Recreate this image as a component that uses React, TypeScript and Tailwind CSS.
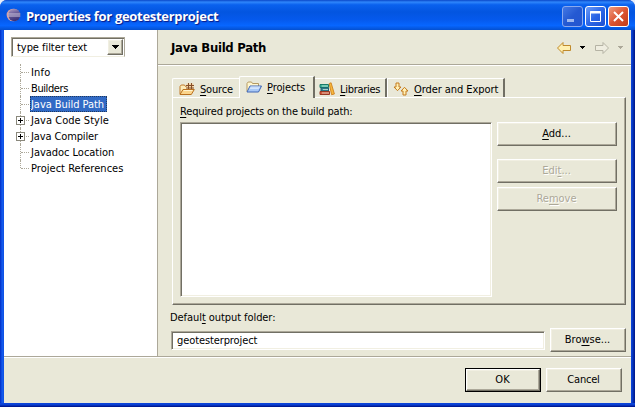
import type { ReactNode } from "react";

const FACE = "border border-t-white border-l-white border-r-[#716f64] border-b-[#716f64] shadow-[inset_-1px_-1px_0_#aca899,inset_1px_1px_0_#f1efe2]";

function Push({ className = "", disabled = false, children }: { className?: string; disabled?: boolean; children: ReactNode }) {
  return (
    <button
      className={`flex h-[24px] shrink-0 items-center justify-center whitespace-nowrap bg-[#e9e8d8] pr-px ${FACE} ${
        disabled ? "text-[#aca899] [text-shadow:1px_1px_0_#fff]" : "text-black"
      } ${className}`}
    >
      <span className="leading-[14px]">{children}</span>
    </button>
  );
}

function U({ children }: { children: ReactNode }) {
  return <span className="underline decoration-1 underline-offset-[2px]">{children}</span>;
}

function EclipseLogo() {
  return (
    <svg width="16" height="16" viewBox="0 0 16 16" className="-mt-[3px] shrink-0">
      <defs>
        <linearGradient id="orb" x1="0" y1="0" x2="0.3" y2="1">
          <stop offset="0" stopColor="#b9a5c4" />
          <stop offset="0.45" stopColor="#6d609c" />
          <stop offset="1" stopColor="#3d3478" />
        </linearGradient>
      </defs>
      <ellipse cx="7.200" cy="8" rx="6.600" ry="6.300" fill="#d8a3a4" />
      <ellipse cx="8.300" cy="8" rx="6" ry="6.200" fill="url(#orb)" />
      <path d="M2 7h12.300M2 9h12.300" stroke="#d9d2e4" strokeWidth="0.9" />
    </svg>
  );
}

function SourceFolderIcon() {
  return (
    <svg width="16" height="14" viewBox="0 0 16 14" className="shrink-0">
      <path d="M1 12V4.500L2.200 3h3.300l1 1.500h6V7" fill="#fdebb8" stroke="#c07a2a" />
      <path d="M7.500 1.500h7v6h-7z" fill="#f3d3a4" />
      <path d="M7 3.500h8M7 6h8M9.500 1v7M12.500 1v7" stroke="#86502a" strokeWidth="1" />
      <path d="M1 12.500L4 7.500h11.300L12.300 12.500z" fill="#fbd58c" stroke="#b9701f" />
      <path d="M4.600 8.500h8.900" stroke="#fff3cf" />
    </svg>
  );
}

function ProjectFolderIcon() {
  return (
    <svg width="16" height="14" viewBox="0 0 16 14" className="shrink-0">
      <path d="M1 11.500V3.500L2.200 2h3.300l1 1.500h6V6" fill="#fff6cf" stroke="#b59a62" />
      <path d="M1 12L4 6h11.500L12.500 12z" fill="#a9c9f6" stroke="#4067b5" />
      <path d="M4.500 7h9.500M3.800 8.300h9" stroke="#e3f0ff" strokeWidth="0.9" />
    </svg>
  );
}

function BooksIcon() {
  return (
    <svg width="16" height="14" viewBox="0 0 16 14" className="shrink-0">
      <path d="M1 2.500h8.500v3H1z" fill="#45b59b" stroke="#187a68" />
      <path d="M2 6h7.500v3H2z" fill="#3f8f9b" stroke="#1e5f71" />
      <path d="M1 9.500h9.500v3H1z" fill="#d85a3c" stroke="#993822" />
      <path d="M3 4h6M4 7.500h5M3 11h7" stroke="#d9efe4" strokeWidth="0.7" />
      <path d="M10.200 1.500l1.900-.7 3.300 11.200-2.800.7z" fill="#f6b93d" stroke="#cf7f1d" strokeWidth="0.9" />
    </svg>
  );
}

function OrderIcon() {
  return (
    <svg width="16" height="14" viewBox="0 0 16 14" className="shrink-0">
      <path d="M3 1h3v4h2L4.500 8.700 1 5h2z" fill="#fff0b5" stroke="#c47a1c" />
      <path d="M10 13h3V9h2l-3.500-3.700L8 9h2z" fill="#fff0b5" stroke="#c47a1c" />
    </svg>
  );
}

function NavArrow({ forward = false }: { forward?: boolean }) {
  return (
    <svg width="16" height="14" viewBox="0 0 16 14" className={forward ? "-scale-x-100" : ""}>
      <path
        d="M1.500 7L7 1.500v3h7.500v5H7v3z"
        fill={forward ? "#efede0" : "#fff0b0"}
        stroke={forward ? "#b5b3a4" : "#c08a2c"}
        strokeLinejoin="round"
      />
    </svg>
  );
}

function Caret({ dim = false }: { dim?: boolean }) {
  return (
    <svg width="5" height="3" viewBox="0 0 5 3" shapeRendering="crispEdges">
      <path d="M0 0h5L2.500 3z" fill={dim ? "#aca899" : "#000"} />
    </svg>
  );
}

const tree = [
  { name: "Info", w: "tracking-[0.2px]" },
  { name: "Builders", w: "tracking-[-0.4px]" },
  { name: "Java Build Path", w: "tracking-[-0.05px]", selected: true },
  { name: "Java Code Style", w: "tracking-[0.03px]", branch: true },
  { name: "Java Compiler", w: "tracking-[-0.12px]", branch: true },
  { name: "Javadoc Location", w: "tracking-[-0.03px]" },
  { name: "Project References", w: "tracking-[0.03px]" },
];

function TreeRow({ item, last }: { item: (typeof tree)[number]; last: boolean }) {
  return (
    <div className="flex h-4 items-center">
      <div className="relative h-4 w-[14px] shrink-0">
        <span className={`absolute left-[4px] top-0 border-l border-dotted border-[#aca899] ${last ? "h-2" : "h-4"}`} />
        <span className="absolute left-[5px] top-2 w-[8px] border-t border-dotted border-[#aca899]" />
        {item.branch && (
          <svg width="9" height="9" viewBox="0 0 9 9" className="absolute left-0 top-[4px]" shapeRendering="crispEdges">
            <path d="M.5.5h8v8h-8z" fill="#fff" stroke="#8a887c" />
            <path d="M2 4.500h5M4.500 2v5" stroke="#000" />
          </svg>
        )}
      </div>
      <span
        className={`flex h-4 items-center whitespace-nowrap pl-px pt-px ${item.w} ${
          item.selected ? "w-[77px] bg-[#316ac5] text-white outline-1 -outline-offset-1 outline-dotted outline-[#203a60]" : ""
        }`}
      >
        {item.name}
      </span>
    </div>
  );
}

function WindowButton({ kind }: { kind: "min" | "max" | "close" }) {
  const tone =
    kind === "close"
      ? "border-white bg-linear-to-br from-[#ee9a7d] via-[#dc5532] to-[#c23a16]"
      : kind === "max"
        ? "border-white bg-linear-to-br from-[#6d9cf8] via-[#2c66e6] to-[#1b4fd2]"
        : "border-[#8aa9ee] bg-linear-to-br from-[#4478e4] via-[#2459d2] to-[#2456d0]";
  return (
    <div className={`h-[21px] w-[21px] rounded-[3px] border ${tone}`}>
      <svg width="19" height="19" viewBox="0 0 19 19">
        {kind === "min" && <path d="M4 13.500h7" stroke="#9db8f0" strokeWidth="3" />}
        {kind === "max" && (
          <>
            <path d="M4.500 4.500h10v10h-10z" fill="none" stroke="#fff" />
            <path d="M4 5.500h11" stroke="#fff" strokeWidth="2" />
          </>
        )}
        {kind === "close" && <path d="M5 5l9 9M14 5l-9 9" stroke="#fff" strokeWidth="2" />}
      </svg>
    </div>
  );
}

export default function App() {
  return (
    <div className="h-[407px] w-[635px] bg-[#e8eefa]">
      <div className="flex h-[407px] w-[635px] flex-col overflow-hidden rounded-t-[7px] bg-[#0a3fd0] font-['DejaVu_Sans_Condensed','DejaVu_Sans',sans-serif] text-[11px] leading-[14px] text-black">
        <header className="flex h-[30px] shrink-0 items-center bg-[linear-gradient(180deg,#0a47c8_0%,#2f86fb_7%,#0a61ee_16%,#0355e0_40%,#0559ec_65%,#0766ff_85%,#0450d0_100%)] pl-[6px] pr-[6px] pt-[2px]">
          <EclipseLogo />
          <h1 className="ml-[4px] flex-1 whitespace-nowrap font-['Open_Sans',sans-serif] text-[13px] font-bold leading-[18px] text-white [text-shadow:1px_1px_1px_#0a1883]">
            <span className="tracking-[-0.3px]">Properties for geotesterproject</span>
          </h1>
          <div className="flex gap-[2px]">
            <WindowButton kind="min" />
            <WindowButton kind="max" />
            <WindowButton kind="close" />
          </div>
        </header>

        <div className="h-[377px] bg-[linear-gradient(0deg,#001486_0px,#001ea0_1px,#0b3fd0_2px,#0b45dc_4px,transparent_4px),linear-gradient(90deg,#0028c0_0px,#0b45dc_1px,#1660f0_3px,#0b45dc_4px,#0b45dc_631px,#0a3fcf_632px,#0430b4_633px,#001486_635px)] px-[4px] pb-[4px]">
          <div className="flex h-[373px] flex-col bg-[#e9e8d8]">
            <div className="flex h-[326px] shrink-0">
              <aside className="w-[153px] shrink-0 bg-white pl-[7px] pt-[7px]">
                <div className="flex h-[20px] w-[114px] items-center border border-b-[#f1efe2] border-l-[#aca899] border-r-[#aca899] border-t-[#aca899] bg-white shadow-[inset_1px_1px_0_#716f64]">
                  <span className="flex-1 whitespace-nowrap pl-[5px] pt-[2px] tracking-[-0.05px]">type filter text</span>
                  <span className={`mr-px flex h-[16px] w-[16px] items-center justify-center bg-[#e9e8d8] ${FACE}`}>
                    <svg width="7" height="4" viewBox="0 0 7 4" shapeRendering="crispEdges">
                      <path d="M0 0h7L3.500 4z" />
                    </svg>
                  </span>
                </div>
                <nav className="ml-[5px] mt-[7px]">
                  {tree.map((item, i) => (
                    <TreeRow key={item.name} item={item} last={i === tree.length - 1} />
                  ))}
                </nav>
              </aside>

              <main className="flex min-w-0 flex-1 flex-col border-l border-[#aca899]">
                <div className="flex h-[36px] shrink-0 items-center border-b border-white pl-[13px] pr-[8px] shadow-[inset_0_-1px_0_#aca899]">
                  <h2 className="flex-1 whitespace-nowrap pt-px text-[13px] font-bold tracking-[-0.3px]">Java Build Path</h2>
                  <div className="flex items-center">
                    <NavArrow />
                    <span className="ml-[8px] mr-[9px]"><Caret /></span>
                    <NavArrow forward />
                    <span className="ml-[8px]"><Caret dim /></span>
                  </div>
                </div>

                <div className="ml-[14px] mt-[10px] flex h-[21px] shrink-0 items-end whitespace-nowrap">
                  <div className="flex h-[19px] w-[67px] items-center rounded-tl-[2px] border-l border-t border-white pl-[6px] pt-px">
                    <SourceFolderIcon />
                    <span className="ml-[5px] pt-[2px] tracking-[-0.2px]"><U>S</U>ource</span>
                  </div>
                  <div className="z-10 -mb-px flex h-[22px] w-[76px] items-center rounded-tl-[2px] border-l border-r-2 border-t border-l-white border-r-[#716f64] border-t-white bg-[#e9e8d8] pb-[2px] pl-[6px]">
                    <ProjectFolderIcon />
                    <span className="ml-[5px] pt-[2px] tracking-[-0.1px]"><U>P</U>rojects</span>
                  </div>
                  <div className="flex h-[19px] w-[72px] items-center border-r-2 border-t border-r-[#716f64] border-t-white pl-[4px] pt-px">
                    <BooksIcon />
                    <span className="ml-[5px] pt-[2px] tracking-[-0.3px]"><U>L</U>ibraries</span>
                  </div>
                  <div className="flex h-[19px] w-[118px] items-center border-l border-r-2 border-t border-l-white border-r-[#716f64] border-t-white pl-[5px] pt-px">
                    <OrderIcon />
                    <span className="ml-[5px] pt-[2px] tracking-[-0.07px]"><U>O</U>rder and Export</span>
                  </div>
                </div>

                <section className="ml-[14px] flex h-[208px] w-[454px] shrink-0 border border-b-[#716f64] border-l-white border-r-[#716f64] border-t-white pl-[7px] shadow-[inset_-1px_-1px_0_#aca899]">
                  <div className="w-[312px] pt-[7px]">
                    <p className="h-[17px] whitespace-nowrap tracking-[-0.15px]"><U>R</U>equired projects on the build path:</p>
                    <div className="h-[175px] border border-b-white border-l-[#aca899] border-r-white border-t-[#aca899] bg-white shadow-[inset_1px_1px_0_#716f64,inset_-1px_-1px_0_#f1efe2]" />
                  </div>
                  <div className="ml-[5px] flex w-[120px] flex-col pt-[24px]">
                    <Push><U>A</U>dd...</Push>
                    <Push disabled className="mt-[13px]">Edi<U>t</U>...</Push>
                    <Push disabled className="mt-[4px]">Re<U>m</U>ove</Push>
                  </div>
                </section>

                <p className="ml-[12px] mt-[6px] h-[17px] whitespace-nowrap tracking-[-0.07px]">Defaul<U>t</U> output folder:</p>
                <div className="ml-[13px] flex items-center">
                  <div className="flex h-[19px] w-[374px] items-center border border-b-white border-l-[#aca899] border-r-white border-t-[#aca899] bg-white pl-[5px] shadow-[inset_1px_1px_0_#716f64,inset_-1px_-1px_0_#f1efe2]">
                    <span className="pt-[2px] tracking-[-0.1px]">geotesterproject</span>
                  </div>
                  <Push className="ml-[5px] w-[76px]">Bro<U>w</U>se...</Push>
                </div>
              </main>
            </div>

            <footer className="flex flex-1 justify-end border-t border-[#aca899] pr-[9px] pt-[11px] shadow-[inset_0_1px_0_#fff]">
              <div className="h-[24px] border border-black">
                <Push className="h-[22px]! w-[74px]">OK</Push>
              </div>
              <Push className="ml-[5px] w-[76px] tracking-[-0.2px]">Cancel</Push>
            </footer>
          </div>
        </div>
      </div>
    </div>
  );
}
